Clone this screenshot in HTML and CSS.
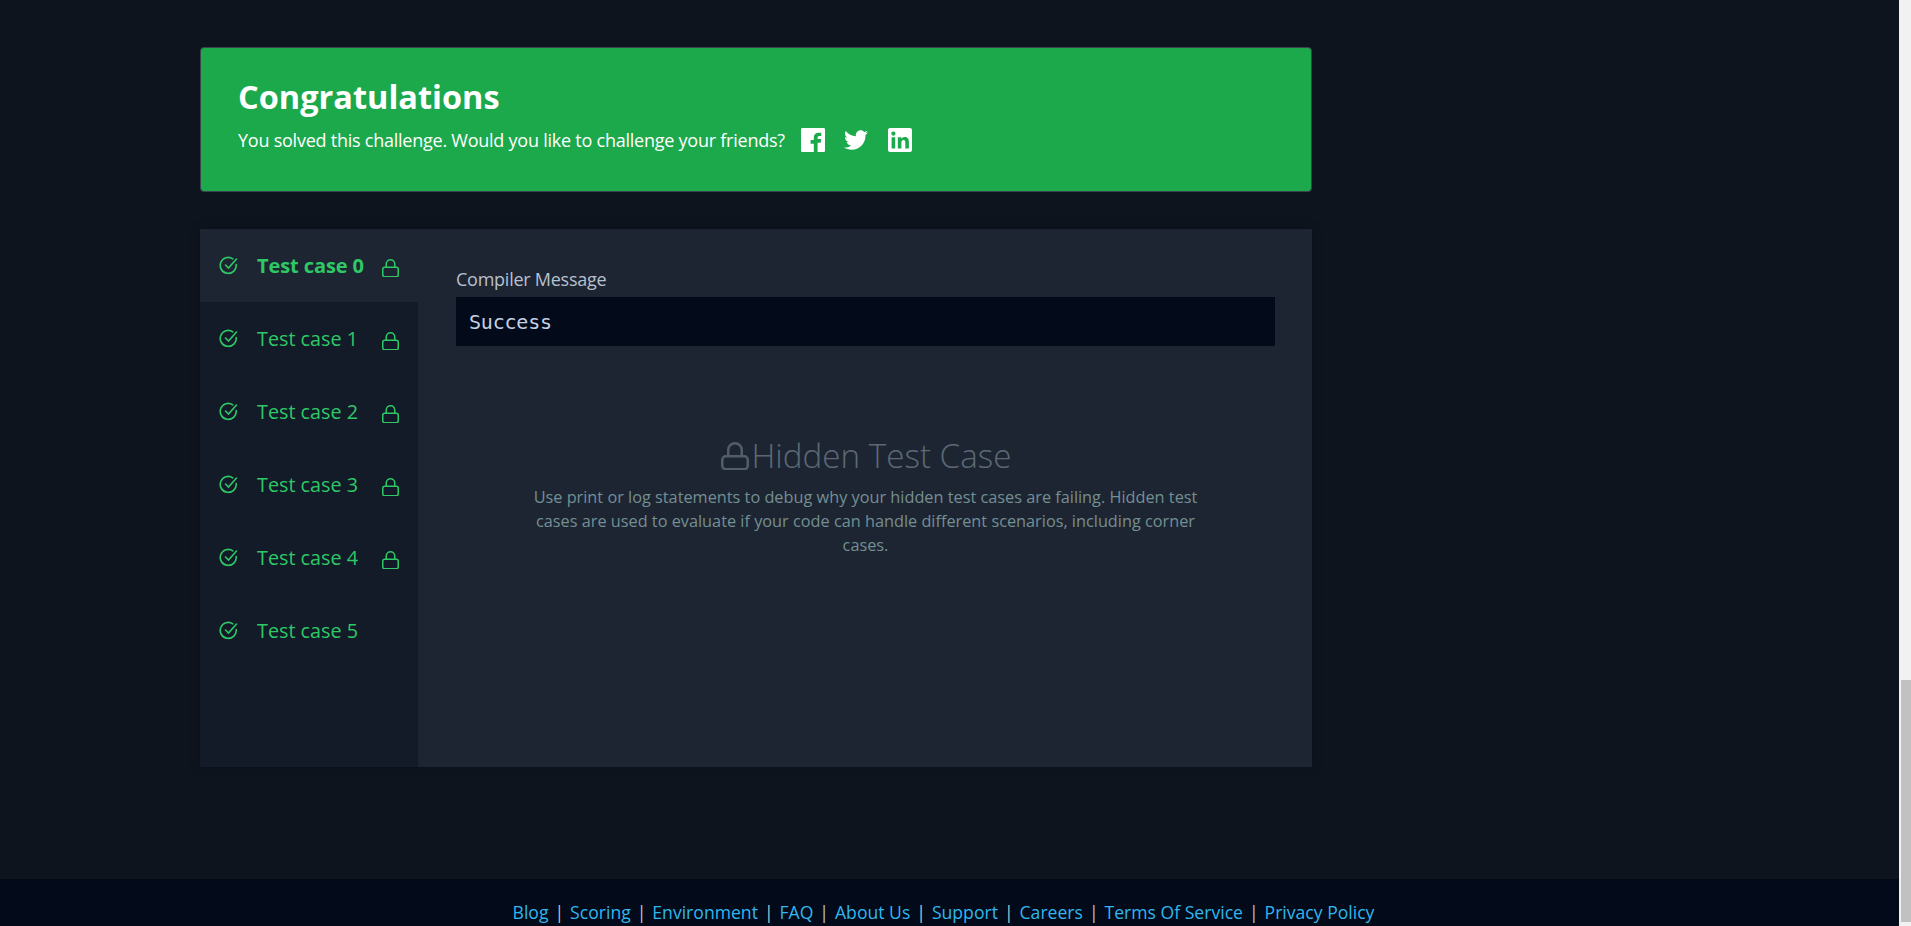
FILE: index.html
```html
<!doctype html>
<html lang="en">
    <head>
        <meta charset="UTF-8">
        <title>Congratulations</title>
        <link rel="stylesheet" href="styles.css">
    </head>
    <body>
        <div class="page">
            <main class="content">
                <section class="banner">
                    <h1>Congratulations</h1>
                    <div class="share">
                        <span>You solved this challenge. Would you like to challenge your friends?</span>
                        <!-- Facebook -->
                        <svg class="share-icon" viewBox="0 0 24 24"><path fill-rule="evenodd" d="M1.3 0h21.4C23.4 0 24 .6 24 1.3v21.4c0 .7-.6 1.3-1.3 1.3h-6.1v-9.3h3.1l.5-3.6h-3.600V9.800c0-1 .3-1.800 1.800-1.800h1.900V4.800c-.3 0-1.500-.1-2.800-.1-2.800 0-4.700 1.700-4.700 4.800v2.600H9.600v3.600h3.200V24H1.300C.6 24 0 23.400 0 22.700V1.300C0 .6.600 0 1.300 0z"/></svg>
                        <!-- Twitter -->
                        <svg class="share-icon" viewBox="0 0 24 24"><path d="M24 4.6c-.9.4-1.8.7-2.8.8 1-.6 1.8-1.6 2.2-2.7-1 .6-2 1-3.1 1.2C19.3 2.9 18 2.3 16.7 2.3c-2.7 0-4.9 2.2-4.9 4.9 0 .4 0 .8.1 1.1C7.8 8.1 4.1 6.1 1.7 3.1c-.4.7-.7 1.6-.7 2.500 0 1.700.9 3.200 2.200 4.100-.8 0-1.600-.2-2.200-.6v.1c0 2.400 1.700 4.400 3.900 4.800-.4.1-.8.2-1.300.2-.3 0-.6 0-.9-.1.6 2 2.400 3.400 4.600 3.400-1.700 1.300-3.800 2.100-6.100 2.100-.4 0-.8 0-1.200-.1 2.200 1.400 4.800 2.200 7.500 2.200 9.100 0 14-7.500 14-14v-.6c1-.7 1.800-1.600 2.500-2.500z"/></svg>
                        <!-- LinkedIn -->
                        <svg class="share-icon" viewBox="0 0 24 24"><path fill-rule="evenodd" d="M2 0h20c1.100 0 2 .9 2 2v20c0 1.100-.9 2-2 2H2c-1.100 0-2-.9-2-2V2C0 .9.900 0 2 0zm1.600 9.200V20.500h3.600V9.200H3.600zM5.400 3.500c-1.200 0-2.100.9-2.100 2.100s.9 2.100 2.100 2.100 2.100-.9 2.100-2.100-.9-2.100-2.100-2.100zm4.400 5.700v11.300h3.600v-5.600c0-1.500.3-2.900 2.100-2.900s1.800 1.700 1.800 3v5.500h3.600v-6.200c0-3-.7-5.400-4.200-5.400-1.700 0-2.800.9-3.300 1.800V9.200H9.800z"/></svg>
                    </div>
                </section>

                <section class="results">
                    <ul class="cases">
                        <li class="case active">
                            <svg class="case-check" viewBox="0 0 20 20"><path d="M17.200 8.500a8 8 0 1 1-3.400-5.700"/><path d="M6.500 9l3 3 8-9"/></svg>
                            <span class="case-name">Test case 0</span>
                            <svg class="case-lock" viewBox="0 0 17 18.500"><rect x=".75" y="8.250" width="15.500" height="9.500" rx="2"/><path d="M4.250 8.250V5a4.250 4.250 0 0 1 8.500 0v3.250"/></svg>
                        </li>
                        <li class="case">
                            <svg class="case-check" viewBox="0 0 20 20"><path d="M17.200 8.500a8 8 0 1 1-3.400-5.700"/><path d="M6.500 9l3 3 8-9"/></svg>
                            <span class="case-name">Test case 1</span>
                            <svg class="case-lock" viewBox="0 0 17 18.500"><rect x=".75" y="8.250" width="15.500" height="9.500" rx="2"/><path d="M4.250 8.250V5a4.250 4.250 0 0 1 8.500 0v3.250"/></svg>
                        </li>
                        <li class="case">
                            <svg class="case-check" viewBox="0 0 20 20"><path d="M17.200 8.500a8 8 0 1 1-3.400-5.700"/><path d="M6.500 9l3 3 8-9"/></svg>
                            <span class="case-name">Test case 2</span>
                            <svg class="case-lock" viewBox="0 0 17 18.500"><rect x=".75" y="8.250" width="15.500" height="9.500" rx="2"/><path d="M4.250 8.250V5a4.250 4.250 0 0 1 8.500 0v3.250"/></svg>
                        </li>
                        <li class="case">
                            <svg class="case-check" viewBox="0 0 20 20"><path d="M17.200 8.500a8 8 0 1 1-3.400-5.700"/><path d="M6.500 9l3 3 8-9"/></svg>
                            <span class="case-name">Test case 3</span>
                            <svg class="case-lock" viewBox="0 0 17 18.500"><rect x=".75" y="8.250" width="15.500" height="9.500" rx="2"/><path d="M4.250 8.250V5a4.250 4.250 0 0 1 8.500 0v3.250"/></svg>
                        </li>
                        <li class="case">
                            <svg class="case-check" viewBox="0 0 20 20"><path d="M17.200 8.500a8 8 0 1 1-3.400-5.700"/><path d="M6.500 9l3 3 8-9"/></svg>
                            <span class="case-name">Test case 4</span>
                            <svg class="case-lock" viewBox="0 0 17 18.500"><rect x=".75" y="8.250" width="15.500" height="9.500" rx="2"/><path d="M4.250 8.250V5a4.250 4.250 0 0 1 8.500 0v3.250"/></svg>
                        </li>
                        <li class="case">
                            <svg class="case-check" viewBox="0 0 20 20"><path d="M17.200 8.500a8 8 0 1 1-3.400-5.700"/><path d="M6.500 9l3 3 8-9"/></svg>
                            <span class="case-name">Test case 5</span>
                        </li>
                    </ul>

                    <div class="output">
                        <div class="output-label">Compiler Message</div>
                        <pre class="output-code">Success</pre>
                        <div class="hidden-case">
                            <h2>
                                <svg class="hidden-lock" viewBox="0 0 28 28.500"><rect x="1.250" y="14.250" width="25.500" height="13" rx="3.500"/><path d="M7.250 14.250V8a6.750 6.750 0 0 1 13.500 0v6.250"/></svg>
                                Hidden Test Case
                            </h2>
                            <p>Use print or log statements to debug why your hidden test cases are failing. Hidden test cases are used to evaluate if your code can handle different scenarios, including corner cases.</p>
                        </div>
                    </div>
                </section>
            </main>

            <footer class="footer">
                <a href="#">Blog</a> | <a href="#">Scoring</a> | <a href="#">Environment</a> | <a href="#">FAQ</a> | <a href="#">About Us</a> | <a href="#">Support</a> | <a href="#">Careers</a> | <a href="#">Terms Of Service</a> | <a href="#">Privacy Policy</a>
            </footer>
        </div>

        <div class="scrollbar"><div class="scrollbar-thumb"></div></div>
    </body>
</html>
```

FILE: styles.css
```css
* {
    box-sizing: border-box;
}
html, body {
    height: 100%;
}
body {
    margin: 0;
    display: flex;
    overflow: hidden;
    font-family: "Open Sans", sans-serif;
    background-color: #0e141e;
}

.page {
    flex: 1;
    display: flex;
    flex-direction: column;
    min-width: 0;
}

.content {
    flex: 1;
    width: 1112px;
    margin-left: 200px;
    padding-top: 47px;
}

/* Bandeau vert */
.banner {
    height: 145px;
    padding: 27px 37px;
    border: 1px solid #39424e;
    border-radius: 4px;
    background-color: #1ba94c;
    color: #fff;
}

.banner h1 {
    margin: 0;
    font-size: 32.5px;
    line-height: 44px;
    font-weight: 700;
}

.share {
    display: flex;
    align-items: center;
    margin-top: 9px;
    font-size: 18px;
    letter-spacing: -0.24px;
}

.share-icon {
    width: 24px;
    height: 24px;
    margin-left: 19px;
    fill: #fff;
}

.share-icon:nth-of-type(1) {
    margin-left: 16px;
}

.share-icon:nth-of-type(3) {
    margin-left: 20px;
}

/* Resultats */
.results {
    display: flex;
    height: 538px;
    margin-top: 37px;
    background-color: #1e2532;
    box-shadow: 0 0 10px rgba(0, 0, 0, 0.25);
}

.cases {
    width: 218px;
    margin: 0;
    padding: 0;
    list-style: none;
    background-color: #131a28;
    color: #2ec866;
    font-size: 19.8px;
}

.case {
    display: flex;
    align-items: center;
    height: 73px;
    padding-left: 19px;
}

.case.active {
    background-color: #1e2532;
}

.case.active .case-name {
    font-size: 20px;
    font-weight: 700;
    letter-spacing: -0.1px;
}

.case-check {
    flex: none;
    width: 20px;
    height: 20px;
    fill: none;
    stroke: #2ec866;
    stroke-width: 1.6;
    stroke-linecap: round;
}

.case-name {
    width: 125px;
    margin-left: 18px;
    white-space: nowrap;
}

.case-lock {
    flex: none;
    width: 17px;
    height: 18.5px;
    margin-top: 5px;
    fill: none;
    stroke: #2ec866;
    stroke-width: 1.5;
}

.output {
    flex: 1;
    padding: 37px 37px 0 38px;
}

.output-label {
    color: #b7c0cf;
    font-size: 18px;
    line-height: 26px;
    letter-spacing: -0.25px;
}

.output-code {
    height: 49px;
    margin: 5px 0 0;
    padding: 2px 13px 0;
    background-color: #030a1a;
    color: #c5d1e3;
    font-family: "DejaVu Sans Mono", monospace;
    font-size: 20px;
    line-height: 47px;
    letter-spacing: -0.2px;
}

.hidden-case {
    width: 680px;
    margin: 88px auto 0;
    text-align: center;
}

.hidden-case h2 {
    display: flex;
    justify-content: center;
    align-items: center;
    gap: 2px;
    margin: 0;
    padding-left: 2px;
    color: #5c6975;
    font-size: 33.2px;
    font-weight: 300;
    line-height: 44px;
}

.hidden-lock {
    width: 28px;
    height: 28.5px;
    fill: none;
    stroke: #515e6a;
    stroke-width: 2.5;
}

.hidden-case p {
    width: 680px;
    margin: 7px 0 0;
    color: #738f93;
    font-size: 16.3px;
    line-height: 24px;
}

.footer {
    height: 47px;
    padding: 20px 12px 0 0;
    background-color: #030a1a;
    color: #b7c9cc;
    font-size: 17.6px;
    line-height: 26px;
    text-align: center;
    white-space: nowrap;
}

.footer a {
    margin: 0 1.4px;
    color: #2fb7ee;
    text-decoration: none;
}

/* Barre de defilement */
.scrollbar {
    flex: none;
    width: 12px;
    padding: 680px 0 4px 2px;
    background-color: #f1f1f1;
}

.scrollbar-thumb {
    height: 100%;
    background-color: #c1c1c1;
}
```
